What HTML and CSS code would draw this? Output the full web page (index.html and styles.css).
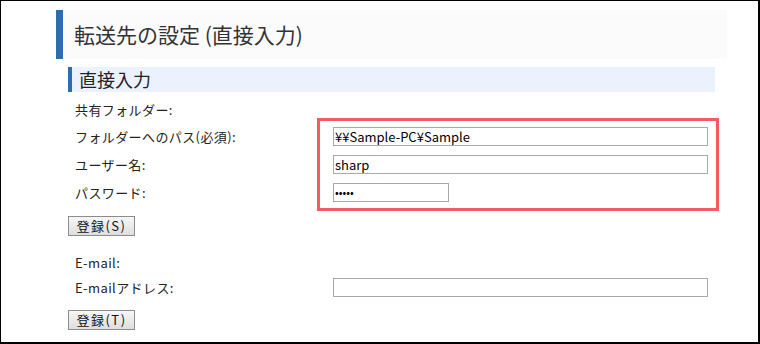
FILE: index.html
```html
<!DOCTYPE html>
<html lang="ja">
<head>
<meta charset="utf-8">
<title>転送先の設定 (直接入力)</title>
<link rel="stylesheet" href="styles.css">
</head>
<body>
<div class="frame">
  <h1 class="title">転送先の設定 (直接入力)</h1>
  <h2 class="section">直接入力</h2>
  <div class="form">
    <div class="group">
      <div class="row"><span class="label">共有フォルダー:</span></div>
      <div class="row tall"><label class="label">フォルダーへのパス(必須):</label><input class="field wide" type="text" value="¥¥Sample-PC¥Sample"></div>
      <div class="row tall"><label class="label">ユーザー名:</label><input class="field wide" type="text" value="sharp"></div>
      <div class="row tall"><label class="label">パスワード:</label><input class="field short" type="password" value="sharp"></div>
    </div>
    <button class="btn btn-s" type="button">登録(S)</button>
    <div class="group group-mail">
      <div class="row"><span class="label">E-mail:</span></div>
      <div class="row compact"><label class="label">E-mailアドレス:</label><input class="field wide" type="text" value=""></div>
    </div>
    <button class="btn btn-t" type="button">登録(T)</button>
  </div>
  <div class="highlight"></div>
</div>
</body>
</html>
```
FILE: styles.css
```css
html, body {
  margin: 0;
  padding: 0;
  background: #ffffff;
}

.frame {
  position: relative;
  width: 760px;
  height: 344px;
  box-sizing: border-box;
  border: 1px solid #000;
  border-right-width: 2px;
  border-bottom-width: 2px;
  padding-top: 9px;
  font-family: "Noto Sans CJK JP", "Noto Sans", sans-serif;
  color: #222;
  overflow: hidden;
}

.title {
  margin: 0 0 0 55px;
  width: 671px;
  height: 49px;
  box-sizing: border-box;
  border-left: 7px solid #2b6cb3;
  background: #fbfbfc;
  padding-left: 11px;
  font-size: 21px;
  font-weight: normal;
  line-height: 49px;
  color: #333;
}

.section {
  margin: 8px 0 0 67px;
  width: 647px;
  height: 25px;
  box-sizing: border-box;
  border-left: 4px solid #2b6cb3;
  background: #ebf1fd;
  padding-left: 7px;
  font-size: 18px;
  font-weight: normal;
  line-height: 25px;
  color: #222;
}

.form {
  margin: 4px 0 0 67px;
  display: flex;
  flex-direction: column;
  align-items: flex-start;
}

.group {
  display: flex;
  flex-direction: column;
}

.row {
  display: flex;
  align-items: center;
  height: 26px;
}

.row.tall {
  height: 28px;
}

.row.compact {
  height: 24px;
}

.label {
  width: 265px;
  box-sizing: border-box;
  padding-left: 7px;
  font-size: 13px;
  letter-spacing: 0.4px;
  color: #222;
}

.field {
  height: 19px;
  box-sizing: border-box;
  border: 1px solid #a9a9a9;
  padding: 0 1px;
  margin: 0;
  font-family: "Noto Sans CJK JP", "Noto Sans", sans-serif;
  font-size: 13px;
  color: #000;
  background: #fff;
  outline: none;
}

.field.wide {
  width: 375px;
}

.field.short {
  width: 116px;
  font-size: 11px;
}

.btn {
  width: 67px;
  height: 20px;
  box-sizing: border-box;
  border: 1px solid #8c8c8c;
  background: linear-gradient(#f7f7f7, #dedede);
  padding: 0;
  margin: 0;
  font-family: "Noto Sans CJK JP", "Noto Sans", sans-serif;
  font-size: 13px;
  letter-spacing: 1.5px;
  line-height: 18px;
  color: #111;
}

.btn-s {
  margin-top: 10px;
}

.group-mail {
  margin-top: 13px;
}

.btn-t {
  margin-top: 11px;
}

.highlight {
  position: absolute;
  left: 316px;
  top: 117px;
  width: 402px;
  height: 93px;
  box-sizing: border-box;
  border: 3px solid #f25b61;
  pointer-events: none;
}
```
